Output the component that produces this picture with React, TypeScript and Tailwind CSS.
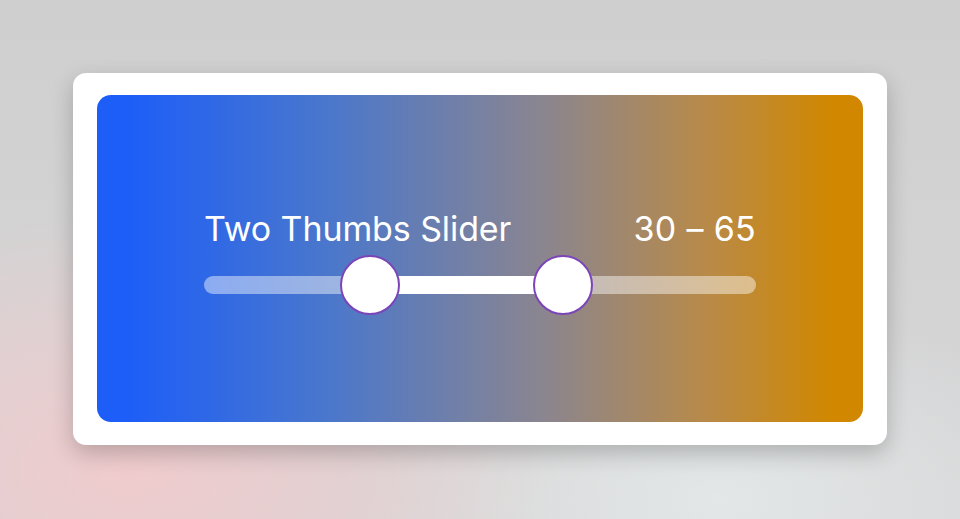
import { useState } from 'react';

const MIN = 0;
const MAX = 100;

export default function App() {
    const [range] = useState<[number, number]>([30, 65]);
    const lo = ((range[0] - MIN) / (MAX - MIN)) * 100;
    const hi = ((range[1] - MIN) / (MAX - MIN)) * 100;

    return (
        <div
            className="w-[960px] h-[519px] overflow-hidden flex items-start justify-center pt-[73px] font-['Inter',sans-serif]"
            style={{
                background:
                    'radial-gradient(ellipse 420px 260px at 130px 470px, #f0cbcd 0%, rgba(240,203,205,0) 100%), radial-gradient(ellipse 380px 200px at 720px 500px, #e3e7e7 0%, rgba(227,231,231,0) 100%), linear-gradient(180deg, #cfcfcf 0%, #d4d4d5 60%, #d6d5d6 100%)',
            }}
        >
            {/* Card */}
            <div className="w-[814px] h-[372px] bg-white rounded-[13px] pt-[22px] pb-[23px] px-6 shadow-[0_8px_22px_rgba(0,0,0,0.22)]">
                <div className="h-full rounded-[14px] bg-[linear-gradient(90deg,#1d5ef8_4%,#4a77cc_30%,#8a8590_58%,#b98a47_80%,#d18800_96%)] flex flex-col justify-center px-[107px] pb-[6px]">
                    {/* Header */}
                    <div className="flex items-baseline justify-between text-white text-[34px] leading-none tracking-[-0.1px] mt-[-6px]">
                        <span>Two Thumbs Slider</span>
                        <span className="tracking-[0.3px]">
                            {range[0]} – {range[1]}
                        </span>
                    </div>

                    {/* Track */}
                    <div className="relative h-[18px] mt-[30px] rounded-full bg-white/45">
                        <div
                            className="absolute top-0 bottom-0 bg-white"
                            style={{ left: `${lo}%`, width: `${hi - lo}%` }}
                        />
                        {[lo, hi].map((p, i) => (
                            <div
                                key={i}
                                className="absolute top-1/2 w-[60px] h-[60px] -translate-x-1/2 -translate-y-1/2 rounded-full bg-white border-2 border-[#7b45b8]"
                                style={{ left: `${p}%` }}
                            />
                        ))}
                    </div>
                </div>
            </div>
        </div>
    );
}
